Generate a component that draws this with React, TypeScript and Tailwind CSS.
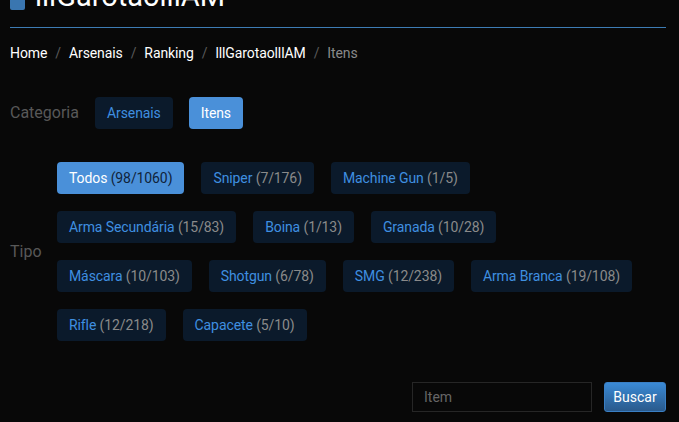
const TYPES: { name: string; count: string; active?: boolean }[][] = [
  [
    { name: 'Todos', count: '(98/1060)', active: true },
    { name: 'Sniper', count: '(7/176)' },
    { name: 'Machine Gun', count: '(1/5)' },
  ],
  [
    { name: 'Arma Secundária', count: '(15/83)' },
    { name: 'Boina', count: '(1/13)' },
    { name: 'Granada', count: '(10/28)' },
  ],
  [
    { name: 'Máscara', count: '(10/103)' },
    { name: 'Shotgun', count: '(6/78)' },
    { name: 'SMG', count: '(12/238)' },
    { name: 'Arma Branca', count: '(19/108)' },
  ],
  [
    { name: 'Rifle', count: '(12/218)' },
    { name: 'Capacete', count: '(5/10)' },
  ],
]

const CRUMBS = ['Home', 'Arsenais', 'Ranking', 'lllGarotaolllAM']

function Chip({ name, count, active }: { name: string; count?: string; active?: boolean }) {
  return (
    <button
      className={`h-8 rounded-[4px] px-3 text-[14px] leading-5 tracking-[-0.1px] ${
        active ? 'bg-[#4a90d9] text-white' : 'bg-[#0b1a2b] text-[#3f8fe0]'
      }`}
    >
      {name}
      {count && (
        <span className={active ? 'text-[#10233a]' : 'text-[#8a8a8a]'}> {count}</span>
      )}
    </button>
  )
}

export default function App() {
  return (
    <div
      className="h-[422px] w-[679px] overflow-hidden bg-[#080808] pl-[10px] pr-[13px]"
      style={{ fontFamily: 'Roboto, "Liberation Sans", sans-serif' }}
    >
      {/* title, scrolled mostly out of view */}
      <div className="-mt-[22px] flex items-end border-b border-[#3d7cb4] pb-[13px]">
        <h1 className="flex items-center gap-[10px] text-[29px] leading-[36px] text-white">
          <span className="mt-[6px] inline-block h-[22px] w-[15px] rounded-[2px] bg-[#3a76b0]" />
          lllGarotaolllAM
        </h1>
      </div>

      {/* breadcrumb */}
      <nav className="mt-[15px] flex items-center text-[14px] leading-5 tracking-[-0.1px]">
        {CRUMBS.map((c) => (
          <span key={c} className="flex items-center">
            <span className="text-white">{c}</span>
            <span className="px-[8px] text-[#5a5a5a]">/</span>
          </span>
        ))}
        <span className="text-[#8a8a8a]">Itens</span>
      </nav>

      {/* categoria */}
      <div className="mt-[34px] flex items-center gap-4">
        <span className="w-[69px] text-[16px] text-[#585858]">Categoria</span>
        <Chip name="Arsenais" />
        <Chip name="Itens" active />
      </div>

      {/* tipo */}
      <div className="mt-[33px] flex items-center">
        <span className="w-[47px] text-[16px] text-[#585858]">Tipo</span>
        <div className="flex flex-col gap-[17px]">
          {TYPES.map((row, i) => (
            <div key={i} className="flex gap-[17px]">
              {row.map((t) => (
                <Chip key={t.name} name={t.name} count={t.count} active={t.active} />
              ))}
            </div>
          ))}
        </div>
      </div>

      {/* search */}
      <div className="mt-[41px] flex justify-end gap-3">
        <input
          placeholder="Item"
          className="h-[30px] w-[180px] border border-[#262626] bg-[#080808] px-[11px] text-[14px] text-white placeholder:text-[#666] outline-none"
        />
        <button className="h-[30px] w-[62px] rounded-[3px] border border-[#3a7fc4] bg-gradient-to-b from-[#3a8ad6] to-[#2a5a8c] text-[14px] text-white">
          Buscar
        </button>
      </div>
    </div>
  )
}
